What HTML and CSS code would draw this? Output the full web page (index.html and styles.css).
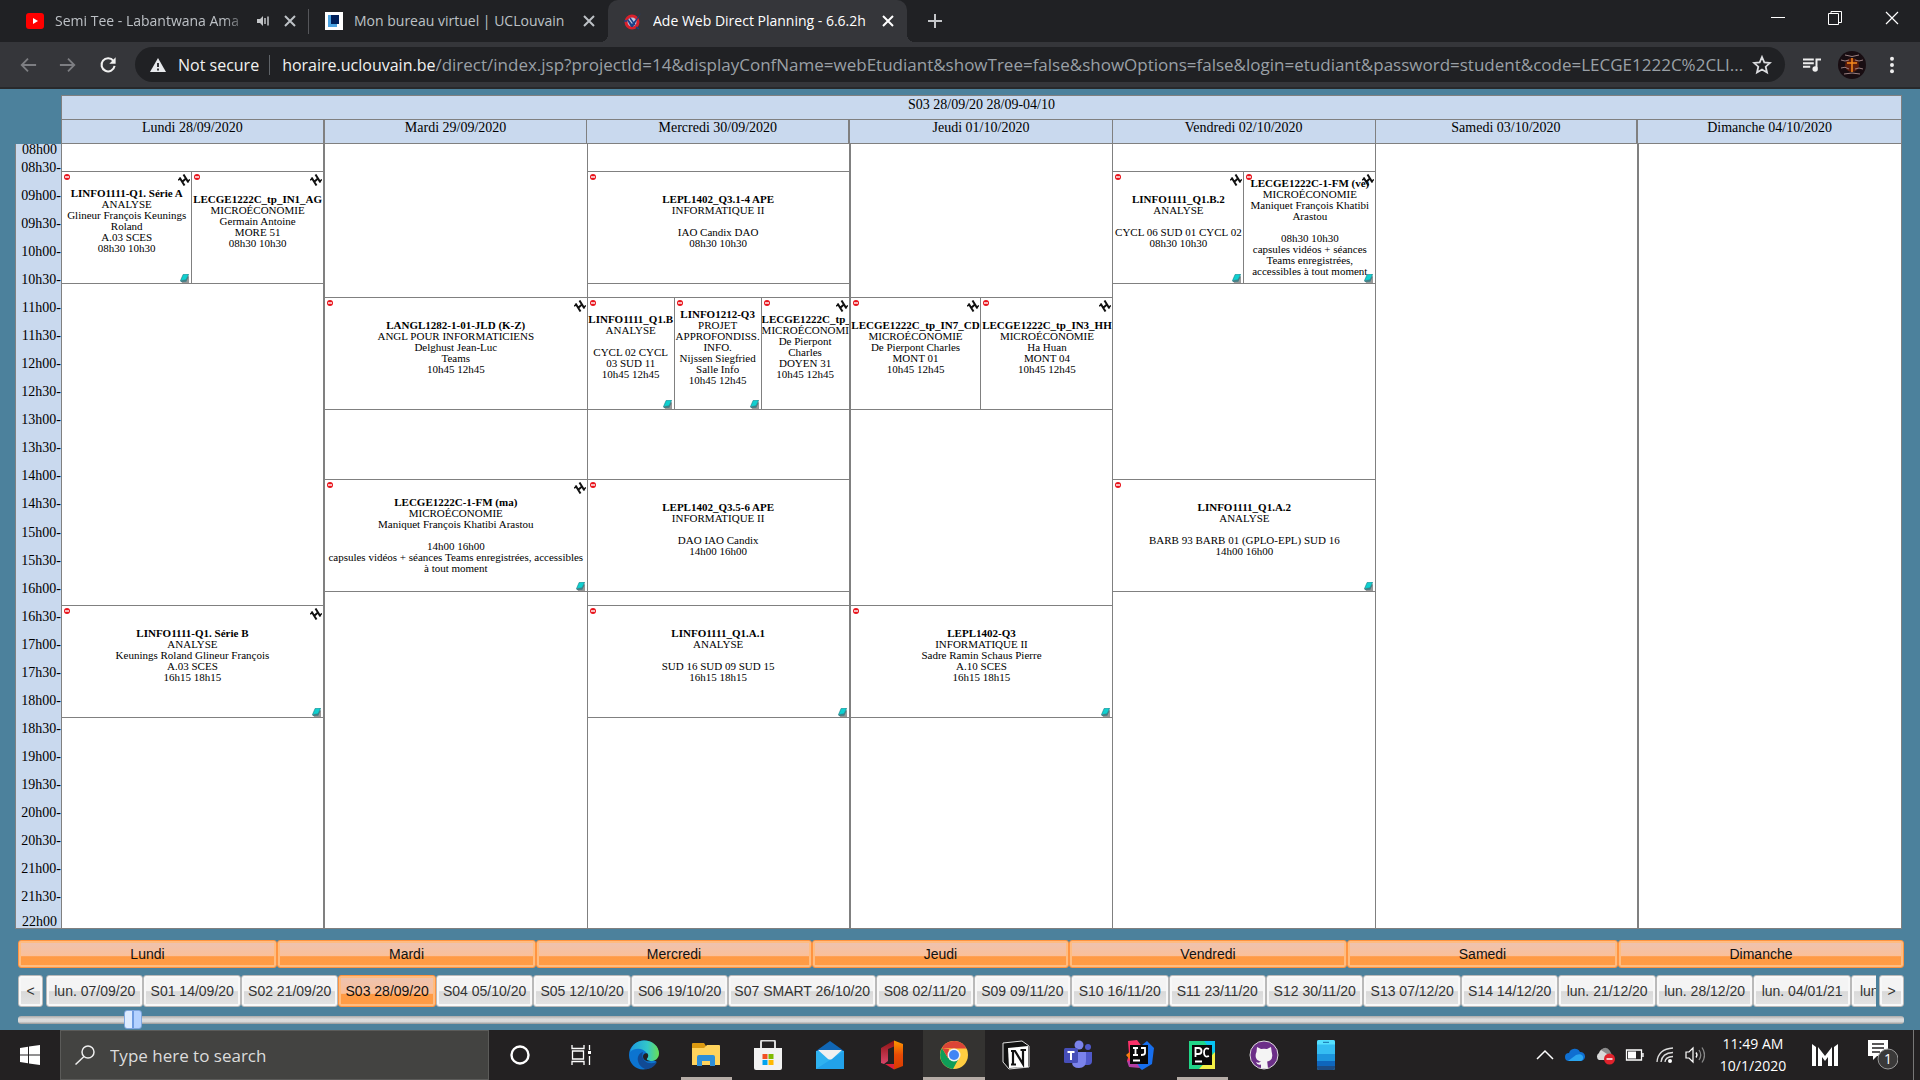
FILE: index.html
```html
<!DOCTYPE html>
<html lang="fr">
<head>
<meta charset="utf-8">
<title>Ade Web Direct Planning - 6.6.2h</title>
<link rel="stylesheet" href="styles.css">
</head>
<body>
<svg class="defs" aria-hidden="true">
  <symbol id="x" viewBox="0 0 18 18"><path d="M4 4l10 10M14 4L4 14" stroke="currentColor" stroke-width="2" fill="none"/></symbol>
  <symbol id="stop" viewBox="0 0 6 6"><circle cx="3" cy="3" r="3" fill="#e8141c"/><path d="M1 3h4" stroke="#fff" stroke-width="1.4"/></symbol>
  <symbol id="link" viewBox="0 0 12 12"><path d="M1.500 3.500l5 8M5.500 .5l5 8M4 8l4.500-4" stroke="#111" stroke-width="2" fill="none"/><path d="M0 6l3-1.500M9 7.500l3-2" stroke="#111" stroke-width="1.500"/></symbol>
  <symbol id="book" viewBox="0 0 10 10"><path d="M6 3h4v7H2V8z" fill="#999"/><path d="M3.500 .5L9.500 0 7 6.500.5 7.500z" fill="#10d0d0" stroke="#157f86" stroke-width=".7"/><path d="M.5 7.500L7 6.500 9.500 1v2L7 8.500 1 9z" fill="#3f7f86"/></symbol>
</svg>

<header class="browser">
  <nav class="tabs" aria-label="Onglets">
    <div class="tab">
      <svg class="fav" viewBox="0 0 18 18"><rect y="1" width="18" height="16" rx="3" fill="#f00"/><path d="M7 6l5 3-5 3z" fill="#fff"/></svg>
      <span class="tab-title fade">Semi Tee - Labantwana Ama</span>
      <svg class="sound" viewBox="0 0 14 14"><path d="M1 5h3l3-3v10L4 9H1z" fill="#c4c6c9"/><path d="M9 4v6M12 2.500v9" stroke="#c4c6c9" stroke-width="1.500"/></svg>
      <button class="close" aria-label="Fermer"><svg><use href="#x"/></svg></button>
    </div>
    <div class="tab">
      <svg class="fav" viewBox="0 0 18 18"><path fill="#fff" d="M0 0h18v18H0z"/><path fill="#4ba3e2" d="M3 3h9v12H3z"/><path fill="#00205b" d="M6 3h8v9H6z"/></svg>
      <span class="tab-title">Mon bureau virtuel | UCLouvain</span>
      <button class="close" aria-label="Fermer"><svg><use href="#x"/></svg></button>
    </div>
    <div class="tab active">
      <svg class="fav" viewBox="0 0 18 18"><circle cx="8" cy="10" r="6" fill="#b9c4dc" stroke="#d8202c" stroke-width="3"/><path d="M4 7l4 5L17 1 9 15H7L3 8z" fill="#1c3f86"/><path d="M6 6l5 7M0 9h3M12 15l3 2" stroke="#1c3f86" stroke-width="1.500"/></svg>
      <span class="tab-title">Ade Web Direct Planning - 6.6.2h</span>
      <button class="close" aria-label="Fermer"><svg><use href="#x"/></svg></button>
    </div>
    <button class="new-tab" aria-label="Nouvel onglet"><svg viewBox="0 0 16 16"><path d="M8 1v14M1 8h14" stroke="#c4c6c9" stroke-width="2"/></svg></button>
    <div class="window-buttons">
      <button aria-label="Réduire"><svg viewBox="0 0 14 14"><path d="M0 6.500h14" stroke="#fff"/></svg></button>
      <button aria-label="Restaurer"><svg viewBox="0 0 14 14"><path d="M.5 2.500h10v11H.5zM3 2.500v-2h10.500v11H11" stroke="#fff" fill="none"/></svg></button>
      <button aria-label="Fermer"><svg viewBox="0 0 14 14"><path d="M1 1l12 12M13 1L1 13" stroke="#fff" stroke-width="1.200"/></svg></button>
    </div>
  </nav>
  <div class="toolbar">
    <button class="tool" aria-label="Précédent"><svg viewBox="0 0 20 20"><path d="M19 10H3M10 3l-7 7 7 7" stroke="#7d7e82" stroke-width="2" fill="none"/></svg></button>
    <button class="tool" aria-label="Suivant"><svg viewBox="0 0 20 20"><path d="M1 10h16M10 3l7 7-7 7" stroke="#7d7e82" stroke-width="2" fill="none"/></svg></button>
    <button class="tool" aria-label="Actualiser"><svg viewBox="0 0 20 20"><path d="M16 5.500A7.300 7.300 0 1 0 17.300 11" stroke="#f1f1f1" stroke-width="2.300" fill="none"/><path d="M18.500 1.500v7h-7z" fill="#f1f1f1"/></svg></button>
    <div class="omnibox">
      <svg class="warn" viewBox="0 0 16 14"><path d="M8 0l8 14H0z" fill="#e8eaed"/><path d="M8 5v4M8 10.500v2" stroke="#202124" stroke-width="1.800"/></svg>
      <span class="secure">Not secure</span>
      <label class="host" for="url">horaire.uclouvain.be</label>
      <input id="url" class="path" type="text" value="/direct/index.jsp?projectId=14&amp;displayConfName=webEtudiant&amp;showTree=false&amp;showOptions=false&amp;login=etudiant&amp;password=student&amp;code=LECGE1222C%2CLI...">
      <button class="star" aria-label="Favori"><svg viewBox="0 0 20 20"><path d="M10 2l2.300 5.400 5.700.5-4.300 3.800 1.300 5.800-5-3-5 3 1.300-5.800L2 7.900l5.700-.5z" stroke="#dcdde0" stroke-width="1.800" fill="none"/></svg></button>
    </div>
    <div class="extras">
      <button class="tool" aria-label="File de lecture"><svg viewBox="0 0 20 20"><path d="M0 4h12M0 8h12M0 12h8" stroke="#eee" stroke-width="2.200"/><path d="M15 14V4h5" stroke="#eee" stroke-width="2.200" fill="none"/><circle cx="13.500" cy="14.500" r="3" fill="#eee"/></svg></button>
      <button class="tool avatar" aria-label="Profil"><svg viewBox="0 0 28 28"><circle cx="14" cy="14" r="14" fill="#180d12"/><circle cx="14" cy="14" r="7" fill="#5c1d0d"/><path d="M14 7v14M9 12h10" stroke="#f78a1d" stroke-width="1.500"/><path d="M7 4q7 3 14 0M3 9q4 2 8 0M17 9q4 2 8 0M3 17q4-2 8 1M17 18q4-2 8 0M6 23q8-2 16 0" stroke="#9a7f80" fill="none"/></svg></button>
      <button class="tool" aria-label="Menu"><svg viewBox="0 0 20 20"><g fill="#eee"><circle cx="10" cy="3" r="2.200"/><circle cx="10" cy="10" r="2.200"/><circle cx="10" cy="17" r="2.200"/></g></svg></button>
    </div>
  </div>
</header>

<main class="planning">
  <section class="calendar">
    <div class="cal-head">
      <div class="week-title">S03 28/09/20 28/09-04/10</div>
      <div class="day-names">
        <div class="thick">Lundi 28/09/2020</div><div>Mardi 29/09/2020</div><div class="thick">Mercredi 30/09/2020</div><div>Jeudi 01/10/2020</div><div>Vendredi 02/10/2020</div><div class="thick">Samedi 03/10/2020</div><div>Dimanche 04/10/2020</div>
      </div>
    </div>
    <div class="axis">
      <div class="first"><span class="bare">08h00</span><span>08h30-</span></div>
      <div>09h00-</div><div>09h30-</div><div>10h00-</div><div>10h30-</div><div>11h00-</div><div>11h30-</div><div>12h00-</div><div>12h30-</div><div>13h00-</div><div>13h30-</div><div>14h00-</div><div>14h30-</div><div>15h00-</div><div>15h30-</div><div>16h00-</div><div>16h30-</div><div>17h00-</div><div>17h30-</div><div>18h00-</div><div>18h30-</div><div>19h00-</div><div>19h30-</div><div>20h00-</div><div>20h30-</div><div>21h00-</div><div>21h30-</div><div class="bare">22h00</div>
    </div>
    <div class="days">
      <div class="day thick">
        <article class="event at-0830 half-a"><svg class="stop"><use href="#stop"/></svg><svg class="link"><use href="#link"/></svg><svg class="book"><use href="#book"/></svg>
          <p><b>LINFO1111-Q1. Série A</b><br>ANALYSE<br>Glineur François Keunings Roland<br>A.03 SCES<br>08h30 10h30</p></article>
        <article class="event at-0830 half-b"><svg class="stop"><use href="#stop"/></svg><svg class="link"><use href="#link"/></svg>
          <p><b>LECGE1222C_tp_IN1_AG</b><br>MICROÉCONOMIE<br>Germain Antoine<br>MORE 51<br>08h30 10h30</p></article>
        <article class="event at-1615"><svg class="stop"><use href="#stop"/></svg><svg class="link"><use href="#link"/></svg><svg class="book"><use href="#book"/></svg>
          <p><b>LINFO1111-Q1. Série B</b><br>ANALYSE<br>Keunings Roland Glineur François<br>A.03 SCES<br>16h15 18h15</p></article>
      </div>
      <div class="day">
        <article class="event at-1045"><svg class="stop"><use href="#stop"/></svg><svg class="link"><use href="#link"/></svg>
          <p><b>LANGL1282-1-01-JLD (K-Z)</b><br>ANGL POUR INFORMATICIENS<br>Delghust Jean-Luc<br>Teams<br>10h45 12h45</p></article>
        <article class="event at-1400 noted"><svg class="stop"><use href="#stop"/></svg><svg class="link"><use href="#link"/></svg><svg class="book"><use href="#book"/></svg>
          <p><b>LECGE1222C-1-FM (ma)</b><br>MICROÉCONOMIE<br>Maniquet François Khatibi Arastou<br><br>14h00 16h00<br>capsules vidéos + séances Teams enregistrées, accessibles<br>à tout moment</p></article>
      </div>
      <div class="day thick">
        <article class="event at-0830"><svg class="stop"><use href="#stop"/></svg>
          <p><b>LEPL1402_Q3.1-4 APE</b><br>INFORMATIQUE II<br><br>IAO Candix DAO<br>08h30 10h30</p></article>
        <article class="event at-1045 third-a"><svg class="stop"><use href="#stop"/></svg><svg class="book"><use href="#book"/></svg>
          <p><b>LINFO1111_Q1.B</b><br>ANALYSE<br><br>CYCL 02 CYCL 03 SUD 11<br>10h45 12h45</p></article>
        <article class="event at-1045 third-b"><svg class="stop"><use href="#stop"/></svg><svg class="book"><use href="#book"/></svg>
          <p><b>LINFO1212-Q3</b><br>PROJET<br>APPROFONDISS.<br>INFO.<br>Nijssen Siegfried<br>Salle Info<br>10h45 12h45</p></article>
        <article class="event at-1045 third-c"><svg class="stop"><use href="#stop"/></svg><svg class="link"><use href="#link"/></svg>
          <p><b>LECGE1222C_tp_</b><br>MICROÉCONOMIE<br>De Pierpont<br>Charles<br>DOYEN 31<br>10h45 12h45</p></article>
        <article class="event at-1400"><svg class="stop"><use href="#stop"/></svg>
          <p><b>LEPL1402_Q3.5-6 APE</b><br>INFORMATIQUE II<br><br>DAO IAO Candix<br>14h00 16h00</p></article>
        <article class="event at-1615"><svg class="stop"><use href="#stop"/></svg><svg class="book"><use href="#book"/></svg>
          <p><b>LINFO1111_Q1.A.1</b><br>ANALYSE<br><br>SUD 16 SUD 09 SUD 15<br>16h15 18h15</p></article>
      </div>
      <div class="day">
        <article class="event at-1045 half-a"><svg class="stop"><use href="#stop"/></svg><svg class="link"><use href="#link"/></svg>
          <p><b>LECGE1222C_tp_IN7_CD</b><br>MICROÉCONOMIE<br>De Pierpont Charles<br>MONT 01<br>10h45 12h45</p></article>
        <article class="event at-1045 half-b"><svg class="stop"><use href="#stop"/></svg><svg class="link"><use href="#link"/></svg>
          <p><b>LECGE1222C_tp_IN3_HH</b><br>MICROÉCONOMIE<br>Ha Huan<br>MONT 04<br>10h45 12h45</p></article>
        <article class="event at-1615"><svg class="stop"><use href="#stop"/></svg><svg class="book"><use href="#book"/></svg>
          <p><b>LEPL1402-Q3</b><br>INFORMATIQUE II<br>Sadre Ramin Schaus Pierre<br>A.10 SCES<br>16h15 18h15</p></article>
      </div>
      <div class="day">
        <article class="event at-0830 half-a"><svg class="stop"><use href="#stop"/></svg><svg class="link"><use href="#link"/></svg><svg class="book"><use href="#book"/></svg>
          <p><b>LINFO1111_Q1.B.2</b><br>ANALYSE<br><br><span class="line">CYCL 06 SUD 01 CYCL 02</span><br>08h30 10h30</p></article>
        <article class="event at-0830 half-b noted"><svg class="stop"><use href="#stop"/></svg><svg class="link"><use href="#link"/></svg><svg class="book"><use href="#book"/></svg>
          <p><b>LECGE1222C-1-FM (ve)</b><br>MICROÉCONOMIE<br>Maniquet François Khatibi<br>Arastou<br><br>08h30 10h30<br>capsules vidéos + séances<br>Teams enregistrées,<br>accessibles à tout moment</p></article>
        <article class="event at-1400"><svg class="stop"><use href="#stop"/></svg><svg class="book"><use href="#book"/></svg>
          <p><b>LINFO1111_Q1.A.2</b><br>ANALYSE<br><br>BARB 93 BARB 01 (GPLO-EPL) SUD 16<br>14h00 16h00</p></article>
      </div>
      <div class="day thick"></div>
      <div class="day"></div>
    </div>
  </section>

  <section class="selectors">
    <div class="day-buttons">
      <button>Lundi</button><button>Mardi</button><button>Mercredi</button><button>Jeudi</button><button>Vendredi</button><button>Samedi</button><button>Dimanche</button>
    </div>
    <div class="week-row">
      <button class="step">&lt;</button>
      <div class="week-buttons">
        <button>lun. 07/09/20</button><button>S01 14/09/20</button><button>S02 21/09/20</button><button class="selected">S03 28/09/20</button><button>S04 05/10/20</button><button>S05 12/10/20</button><button>S06 19/10/20</button><button>S07 SMART 26/10/20</button><button>S08 02/11/20</button><button>S09 09/11/20</button><button>S10 16/11/20</button><button>S11 23/11/20</button><button>S12 30/11/20</button><button>S13 07/12/20</button><button>S14 14/12/20</button><button>lun. 21/12/20</button><button>lun. 28/12/20</button><button>lun. 04/01/21</button><button class="cut">lun</button>
      </div>
      <button class="step">&gt;</button>
    </div>
    <input class="slider" type="range" min="0" max="1000" value="57" aria-label="Semaine">
  </section>
</main>

<footer class="taskbar">
  <button class="start" aria-label="Démarrer"><svg viewBox="0 0 20 20"><path d="M0 3l8-1.200V9.500H0zM9 1.600L20 0v9.500H9zM0 10.500h8v7.700L0 17zM9 10.500h11V20L9 18.400z" fill="#fff"/></svg></button>
  <div class="search">
    <svg viewBox="0 0 20 20"><circle cx="13" cy="7" r="6" stroke="#eee" stroke-width="1.500" fill="none"/><path d="M9 11.500l-8.500 8" stroke="#eee" stroke-width="1.500"/></svg>
    <input type="text" placeholder="Type here to search" aria-label="Search">
  </div>
  <nav class="apps" aria-label="Applications">
    <button aria-label="Cortana"><svg viewBox="0 0 30 30"><circle cx="15" cy="15" r="8.500" stroke="#fff" stroke-width="2.400" fill="none"/></svg></button>
    <button aria-label="Task view"><svg viewBox="0 0 30 30"><path d="M5 5v3.500h12V5M5 25v-3.500h12V25M5.500 11h11v8h-11zM22.500 5v5M22.500 16v9" stroke="#fff" stroke-width="1.300" fill="none"/><path d="M21 11h3v3h-3z" fill="#fff"/></svg></button>
    <button aria-label="Edge"><svg viewBox="0 0 30 30"><defs><linearGradient id="edge" x2="1"><stop stop-color="#1c9be0"/><stop offset=".6" stop-color="#33c7c9"/><stop offset="1" stop-color="#6ade55"/></linearGradient></defs><path d="M15 .5C7 .5 0 7 0 15s6 14.500 14 14.500c6 0 11-3 13.500-8L17 17l13-4C29 6 23 .5 15 .5z" fill="#0c74d0"/><path d="M1 12C3 4 9 .5 15 .5c9 0 15 6 15 13 0 5-4 7.500-8 7.500-3 0-5-1-4-2.500 1.500-2 1-3.500 0-5C15 8 6 7 1 12z" fill="url(#edge)"/><path d="M14 12c-4 1-6 5-5 9 1 4.500 4 7 8 8.300 5-.3 9-3.300 11-7.300-9 4-17-2-14-10z" fill="#114a94"/><path d="M18.500 13.500c1.500 2 .5 3.500-.5 5-1 1.500 2 2.500 4 2.500-4 1-8-1-8-4.500 0-2.500 2-4 4.500-3z" fill="#232122"/></svg></button>
    <button class="running" aria-label="Explorer"><svg viewBox="0 0 30 30"><path d="M1 4q0-1 1-1h11l2 3v4H1z" fill="#dc9a10"/><path d="M1 8h12l3-3h12q1 0 1 1v19H1z" fill="#ffd35c"/><path d="M6 26v-9q0-2 2-2h14q2 0 2 2v9h-5v-5h-8v5z" fill="#2e8fd8"/></svg></button>
    <button aria-label="Store"><svg viewBox="0 0 30 30"><path d="M8 9V2q0-1.500 1.500-1.500h11Q22 .5 22 2v7" stroke="#ddd" stroke-width="2" fill="none"/><path d="M1 8h28v20q0 2-2 2H3q-2 0-2-2z" fill="#f2f2f2"/><path d="M9.500 14h5v5h-5z" fill="#f25022"/><path d="M15.500 14h5v5h-5z" fill="#7fba00"/><path d="M9.500 20h5v5h-5z" fill="#00a4ef"/><path d="M15.500 20h5v5h-5z" fill="#ffb900"/></svg></button>
    <button aria-label="Mail"><svg viewBox="0 0 30 30"><path d="M1 11L15 1l14 10z" fill="#1066b5"/><path d="M1 11h28v18H1z" fill="#2fb2f0"/><path d="M1 29l28-18v18z" fill="#22a2ea"/><path d="M3 10h24l-10 9q-2 1-4 0z" fill="#f0f0f0"/></svg></button>
    <button aria-label="Office"><svg viewBox="0 0 30 30"><defs><linearGradient id="off" x2="0" y2="1"><stop stop-color="#8e1212"/><stop offset="1" stop-color="#d9466a"/></linearGradient><linearGradient id="off2" x2="0" y2="1"><stop stop-color="#ff9a00"/><stop offset=".5" stop-color="#e64a06"/><stop offset="1" stop-color="#d83b01"/></linearGradient></defs><path d="M4 8l13-7.500v6L11 9v12l-4 3-3-1z" fill="url(#off)"/><path d="M17 .5L26 4v22l-9 3.500z" fill="url(#off2)"/><path d="M8 24h9v5.500z" fill="#e0203c"/></svg></button>
    <button class="current" aria-label="Chrome"><svg viewBox="0 0 30 30"><circle cx="15" cy="15" r="14" fill="#ffcd41"/><path d="M3 8A14 14 0 0 1 27.500 8.500H15z" fill="#db4437"/><path d="M3 8a14 14 0 0 0 11 21l6-11H9z" fill="#0f9d58"/><path d="M3 8L9 18l1-9z" fill="#db4437"/><circle cx="15" cy="15" r="6.500" fill="#f1f1f1"/><circle cx="15" cy="15" r="5" fill="#4285f4"/></svg></button>
    <button aria-label="Notion"><svg viewBox="0 0 30 30"><path d="M2 3l19-2 7 5v21L8 29l-6-7z" fill="#111" stroke="#ddd"/><path d="M7 8l20-2v21L8 28z" fill="#fff"/><path d="M10 24.500h5M12 24V11M10 11h4l8 13V10M19.500 10H25" stroke="#111" stroke-width="2.200" fill="none"/></svg></button>
    <button aria-label="Teams"><svg viewBox="0 0 30 30"><circle cx="16" cy="5" r="4.500" fill="#7b83eb"/><circle cx="25" cy="7" r="3" fill="#5059c9"/><path d="M20 12h9v9q0 4-4 4h-5z" fill="#5059c9"/><path d="M9 12h14v9q0 7-7 7t-7-6z" fill="#7b83eb"/><rect x="1" y="8" width="14" height="15" rx="1.500" fill="#464eb8"/><path d="M4.500 12h7M8 12v8" stroke="#fff" stroke-width="2"/></svg></button>
    <button aria-label="IntelliJ"><svg viewBox="0 0 30 30"><path d="M3 1l9-1 6 8-6 19-10-6 2-7z" fill="#fc3169"/><path d="M1 15l6-5v12z" fill="#f97a12"/><path d="M17 5l5-4 7 7-2 16-10 6-7-6z" fill="#176fee"/><path d="M2 21l2 6 11 1-5-8z" fill="#b53fa5"/><path d="M5 5h18v19H5z" fill="#080808"/><path d="M8 20.500h7M8 8h5M10.500 8v7M8 15h5M16 8h4v5q0 2-4 2" stroke="#fff" stroke-width="1.800" fill="none"/></svg></button>
    <button class="running" aria-label="PyCharm"><svg viewBox="0 0 30 30"><path d="M2 1h26v28H2z" fill="#21d789"/><path d="M17 1h11v14z" fill="#07c3f2"/><path d="M28 12v17H12z" fill="#f3ef45"/><path d="M5 5h20v20H5z" fill="#080808"/><path d="M8 21.500h7M8.500 17V8h3q3 0 3 3t-3 3h-3M22 9q-5-2-5 3.500T22 16" stroke="#fff" stroke-width="1.800" fill="none"/></svg></button>
    <button aria-label="GitHub"><svg viewBox="0 0 30 30"><circle cx="15" cy="15" r="14" fill="#6c2f88" stroke="#ddd"/><path d="M8 7l4 2q3-.7 6 0l4-2 .7 5q2.300 8-4.500 9.500l.8 7h-7v-4q-4 1-5-2.500 3 1.500 5-.5C5 20 6.500 14 7.500 12z" fill="#f4f4f4"/></svg></button>
    <button aria-label="Your Phone"><svg viewBox="0 0 30 30"><path d="M6 2q0-2 2-2h14q2 0 2 2v26q0 2-2 2H8q-2 0-2-2z" fill="#35bdf2"/><path d="M6 2q0-2 2-2h14q2 0 2 2v2.500H6z" fill="#55e0ff"/><path d="M6 14h18v7H6z" fill="#1d95dd"/><path d="M6 21h18v5H6z" fill="#0f66bd"/><path d="M6 26h18v2q0 2-2 2H8q-2 0-2-2z" fill="#1c4c85"/><path d="M12 2.300h6" stroke="#146faa"/></svg></button>
  </nav>
  <div class="tray">
    <button aria-label="Icônes cachées"><svg viewBox="0 0 20 20"><path d="M2 14l8-8 8 8" stroke="#fff" stroke-width="1.500" fill="none"/></svg></button>
    <button aria-label="OneDrive"><svg viewBox="0 0 20 20"><path d="M4 16a4 4 0 0 1 0-8 6 6 0 0 1 11-1 4.500 4.500 0 0 1 1 9z" fill="#0f6fd1"/><path d="M3 16l8-6q3-1 5-.5a3.500 3.500 0 0 1 0 6.500z" fill="#2aa5ef"/></svg></button>
    <button aria-label="OneDrive, erreur"><svg viewBox="0 0 20 20"><path d="M4 15a4 4 0 0 1 0-7 6 6 0 0 1 11-1l1 8z" fill="#d9d9d9"/><path d="M6 5q5-5 9 1l2 4-5-1z" fill="#8b8b8b"/><circle cx="14.500" cy="14" r="5.500" fill="#e0222c"/><path d="M11.500 14h6" stroke="#fff" stroke-width="1.500"/></svg></button>
    <button aria-label="Batterie"><svg viewBox="0 0 20 20"><path d="M1.500 5h15v10h-15zM18 8v4" stroke="#fff" stroke-width="1.300" fill="none"/><path d="M3 6.500h8v7H3z" fill="#fff"/></svg></button>
    <button aria-label="Wi-Fi"><svg viewBox="0 0 20 20"><path d="M2 17Q3 4 18 3M6 17q1-9 12-9.500M10 17q0-5 8-5.500" stroke="#ddd" stroke-width="1.300" fill="none"/><circle cx="15" cy="16" r="2" fill="#fff"/></svg></button>
    <button aria-label="Volume"><svg viewBox="0 0 20 20"><path d="M1 7h3l4-4v14l-4-4H1z" stroke="#fff" stroke-width="1.200" fill="none"/><path d="M11 7.500q2 2.500 0 5" stroke="#fff" fill="none" stroke-width="1.300"/><path d="M14 5q3.500 5 0 10M17 2.500q5 7.500 0 15" stroke="#888" fill="none" stroke-width="1.300"/></svg></button>
  </div>
  <time class="clock" datetime="2020-10-01T11:49">11:49 AM<br>10/1/2020</time>
  <button class="brand" aria-label="M"><svg viewBox="0 0 26 22"><path d="M0 0v22h4V3zM26 0v22h-4V3zM6 3l7 9 7-9v19h-4v-9l-3 4-3-4v9H6z" fill="#fff"/></svg></button>
  <button class="notify" aria-label="Notifications"><svg viewBox="0 0 30 30"><path d="M0 0h20v16H9l-4 4v-4H0z" fill="#fff"/><path d="M4 4h12M4 8h12M4 12h8" stroke="#232122" stroke-width="1.300"/><circle cx="20" cy="19" r="10" fill="#3a3939" stroke="#999"/></svg><span>1</span></button>
</footer>
</body>
</html>
```
FILE: styles.css
```css
* { box-sizing: border-box; }
body {
  margin: 0;
  min-height: 100vh;
  display: flex;
  flex-direction: column;
  background: #4c819c;
  font-family: "Open Sans", "Noto Sans", sans-serif;
}
button { margin: 0; padding: 0; border: 0; background: none; font: inherit; color: inherit; }
input { margin: 0; border: 0; background: none; font: inherit; }
svg { display: block; flex: none; }
.defs { width: 0; height: 0; position: absolute; }

/* Browser chrome */
.tabs { display: flex; height: 42px; padding-left: 10px; background: #202124; }
.tab {
  width: 299px;
  display: flex;
  align-items: center;
  padding: 0 10px 0 16px;
  color: #bdc1c6;
  font-size: 14px;
  position: relative;
}
.tab:first-child::after { content: ""; position: absolute; right: 0; top: 9px; height: 25px; border-right: 1px solid #55565a; }
.tab.active { background: #35363a; color: #fff; border-radius: 10px 10px 0 0; }
.tab.active::before, .tab.active::after { content: ""; position: absolute; bottom: 0; width: 8px; height: 8px; }
.tab.active::before { left: -8px; background: radial-gradient(circle at 0 0, transparent 8px, #35363a 8px); }
.tab.active::after { right: -8px; background: radial-gradient(circle at 100% 0, transparent 8px, #35363a 8px); }
.fav { width: 18px; height: 18px; margin-right: 11px; }
.tab-title { flex: 1; padding-bottom: 1px; white-space: nowrap; overflow: hidden; }
.fade { margin-right: 14px; mask-image: linear-gradient(90deg, #000 90%, rgba(0, 0, 0, .3)); }
.sound { width: 14px; height: 14px; margin-right: 11px; }
.close svg { width: 18px; height: 18px; }
.new-tab { margin-left: 20px; }
.new-tab svg { width: 16px; height: 16px; }
.window-buttons { margin-left: auto; display: flex; }
.window-buttons button { width: 57px; padding: 0 22px 6px; }
.window-buttons svg { width: 14px; height: 14px; }
.toolbar {
  display: flex;
  align-items: center;
  padding: 5px 8px;
  background: #35363a;
  border-bottom: 2px solid #28292b;
}
.tool { width: 40px; display: flex; justify-content: center; }
.tool svg { width: 18px; height: 18px; }
.avatar svg { width: 28px; height: 28px; }
.omnibox {
  flex: 1;
  min-width: 0;
  height: 35px;
  margin-left: 7px;
  padding: 0 13px 0 15px;
  display: flex;
  align-items: center;
  border-radius: 18px;
  background: #202124;
  color: #f1f1f1;
  font-size: 16px;
}
.warn { width: 16px; height: 14px; margin-right: 12px; }
.secure { padding-right: 10px; margin-right: 12px; border-right: 1px solid #5f6368; line-height: 20px; }
.path { flex: 1; min-width: 0; padding: 0; color: #9aa0a6; font-size: 17px; text-overflow: ellipsis; }
.star svg { width: 20px; height: 20px; }
.extras { display: flex; align-items: center; margin-left: 7px; }

/* Calendar */
.planning { flex: 1; display: flex; flex-direction: column; padding-top: 6px; }
.calendar {
  flex: 1;
  display: grid;
  grid-template-columns: 47px 1fr;
  grid-template-rows: auto 1fr;
  margin: 0 18px 0 15px;
  font-family: "Liberation Serif", serif;
  font-size: 14px;
  line-height: 16px;
  color: #000;
}
.cal-head {
  grid-column: 2;
  margin-left: -1px;
  border: 1px solid #808080;
  background: #c9d9ee;
  text-align: center;
}
.week-title { height: 23px; padding-top: 1px; }
.day-names { display: grid; grid-template-columns: repeat(7, minmax(0, 1fr)); border-top: 1px solid #808080; height: 24px; }
.day-names div { border-right: 1px solid #808080; }
.day-names .thick, .day.thick { border-right-width: 2px; }
.day-names div:last-child { border-right: 0; }
.axis {
  display: grid;
  grid-template-rows: 30px repeat(26, minmax(28px, 1fr)) 25px;
  background: #c9d9ee;
  border: 1px solid #808080;
  border-width: 0 1px 1px;
  text-align: right;
  line-height: 12px;
}
.axis > div { display: flex; flex-direction: column; justify-content: flex-end; }
.axis > .first { justify-content: space-between; }
.axis .bare { padding-right: 4px; }
.days { display: grid; grid-template-columns: repeat(7, minmax(0, 1fr)); border-bottom: 1px solid #808080; background: #fff; }
.day {
  display: grid;
  grid-template-columns: repeat(6, minmax(0, 1fr));
  grid-template-rows: repeat(56, minmax(14px, 1fr));
  border-right: 1px solid #808080;
}
.event {
  grid-column: 1 / -1;
  min-height: 0;
  margin-top: -1px;
  padding-bottom: 13px;
  position: relative;
  overflow: hidden;
  display: flex;
  flex-direction: column;
  justify-content: center;
  border: 1px solid #808080;
  border-width: 1px 0;
  font-size: 11px;
  line-height: 11px;
  text-align: center;
}
.event.noted { padding-bottom: 0; }
.event p { margin: 0; }
.line { white-space: nowrap; }
.at-0830 { grid-row: 3 / 11; }
.at-1045 { grid-row: 12 / 20; }
.at-1400 { grid-row: 25 / 33; }
.at-1615 { grid-row: 34 / 42; }
.event.half-a { grid-column: 1 / 4; border-right-width: 1px; }
.event.half-b { grid-column: 4 / 7; }
.event.third-a { grid-column: 1 / 3; border-right-width: 1px; }
.event.third-b { grid-column: 3 / 5; border-right-width: 1px; }
.event.third-c { grid-column: 5 / 7; }
.stop, .link, .book { position: absolute; }
.stop { left: 2px; top: 2px; width: 6px; height: 6px; }
.link { right: 1px; top: 2px; width: 12px; height: 12px; }
.book { right: 2px; bottom: 0; width: 9px; height: 9px; }

/* Day and week selectors */
.selectors {
  display: flex;
  flex-direction: column;
  padding: 11px 16px 1px 18px;
  font-family: "Liberation Sans", sans-serif;
  font-size: 14px;
}
.day-buttons { display: grid; grid-template-columns: 259fr 259fr 276fr 257fr 278fr 271fr 286fr; margin-bottom: 7px; }
.day-buttons button, .week-row button {
  border: 1px solid #b9b9b9;
  border-radius: 3px;
  box-shadow: inset 0 0 0 2px #f8f8f8;
  background: linear-gradient(#f4f4f4 50%, #d9d9d9 52%, #e4e4e4);
  color: #333;
  white-space: nowrap;
}
.day-buttons button, .week-row .selected {
  height: 28px;
  border-color: #ff9440;
  box-shadow: inset 0 0 0 2px #ffbc80;
  background: linear-gradient(#ecc3b2, #fbbf98 58%, #ff9a44 60%, #ff9c46);
  color: #111;
}
.week-row { display: flex; gap: 3px; margin-bottom: 3px; }
.week-row .step { width: 25px; flex: none; }
.week-row button, .week-row .selected { height: 32px; }
.week-buttons {
  flex: 1;
  min-width: 0;
  overflow: hidden;
  display: grid;
  grid-template-columns: repeat(7, minmax(0, 97fr)) minmax(0, 147fr) repeat(10, minmax(0, 97fr)) minmax(0, 25fr);
}
.week-buttons .cut { width: 97px; padding-left: 8px; text-align: left; }
.slider { appearance: none; width: 100%; height: 19px; }
.slider::-webkit-slider-runnable-track {
  height: 8px;
  border-radius: 3px;
  background: linear-gradient(#aaa, #ddd 40%, #d8d8d8 70%, #999);
}
.slider::-webkit-slider-thumb {
  appearance: none;
  width: 18px;
  height: 19px;
  margin-top: -6px;
  border: 1px solid #7fa6de;
  border-radius: 3px;
  background: linear-gradient(90deg, #dcebff 45%, #6f9ce0 45%, #6f9ce0 55%, #b4d2ff 55%);
}

/* Taskbar */
.taskbar { height: 50px; display: flex; align-items: center; background: #232122; color: #fff; }
.start { width: 60px; padding-left: 20px; }
.start svg { width: 20px; height: 20px; }
.search {
  width: 429px;
  height: 50px;
  padding-left: 14px;
  display: flex;
  align-items: center;
  gap: 15px;
  background: #434341;
  border: 1px solid #5b5b59;
  font-size: 17px;
}
.search svg { width: 20px; height: 20px; }
.search input { flex: 1; min-width: 0; padding: 0; color: #fff; }
.search input::placeholder { color: #dcdcdc; opacity: 1; }
.apps { display: flex; height: 50px; }
.apps button { width: 62px; display: flex; align-items: center; justify-content: center; }
.apps svg { width: 30px; height: 30px; }
.apps .running { background: linear-gradient(#b5aca6, #b5aca6) bottom / 51px 3px no-repeat; }
.apps .current { background: linear-gradient(#b5aca6, #b5aca6) bottom / 100% 3px no-repeat #343331; }
.tray { margin-left: auto; display: flex; }
.tray button { width: 30px; display: flex; justify-content: center; }
.tray svg { width: 20px; height: 20px; }
.clock { width: 86px; text-align: center; font-size: 14px; line-height: 22px; }
.brand { width: 58px; }
.brand svg { width: 26px; height: 26px; margin: auto; }
.notify { width: 60px; padding-left: 14px; position: relative; border-right: 1px solid #777; margin-right: 6px; height: 50px; }
.notify svg { width: 30px; height: 30px; }
.notify span { position: absolute; left: 30px; top: 18px; font-size: 14px; line-height: 22px; }
```
